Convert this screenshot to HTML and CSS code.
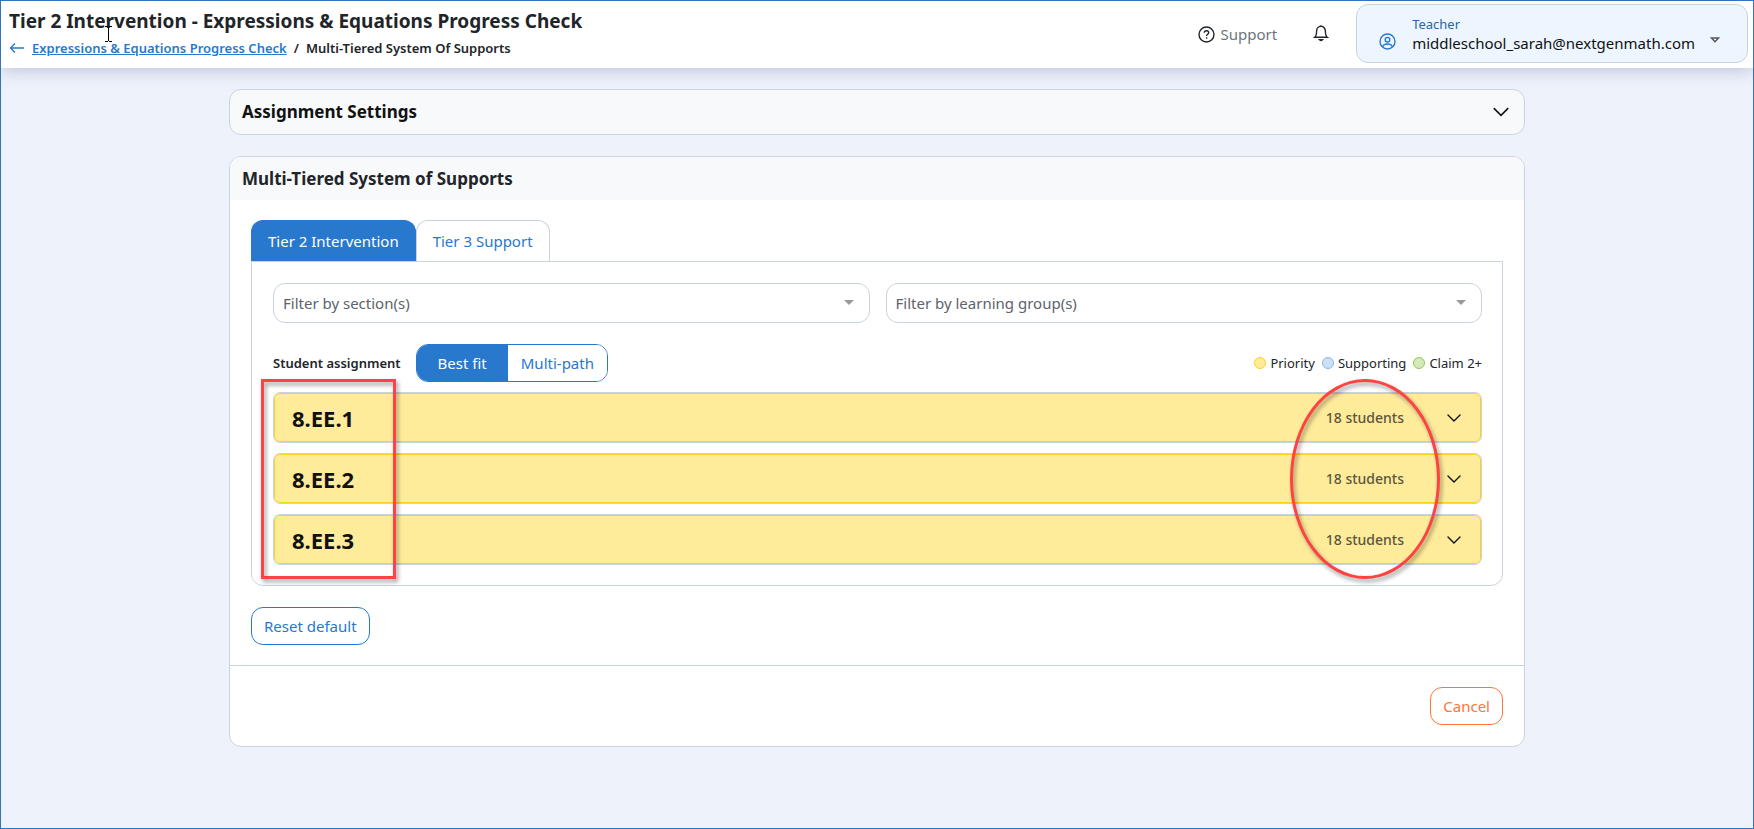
FILE: index.html
```
<!DOCTYPE html>
<html lang="en">
<head>
    <meta charset="UTF-8">
    <meta name="viewport" content="width=device-width, initial-scale=1.0">
    <title>Tier 2 Intervention - Expressions &amp; Equations Progress Check</title>
    <link rel="stylesheet" href="styles.css">
</head>
<body>
    <header class="topbar">
        <div class="titles">
            <h1>Tier 2 Intervention - Expressions &amp; Equations Progress Check</h1>
            <nav class="breadcrumb">
                <svg class="back-arrow" width="16" height="16" viewBox="0 0 16 16"><path d="M15 8H1.500M6 3.500L1.500 8 6 12.500"/></svg>
                <a href="#">Expressions &amp; Equations Progress Check</a>
                <span>/</span>
                <span>Multi-Tiered System Of Supports</span>
            </nav>
            <svg class="text-cursor" width="7" height="16" viewBox="0 0 7 16"><path d="M0 .5h3M4 .5h3M3.500 1v14M0 15.500h3M4 15.500h3"/></svg>
        </div>
        <div class="top-actions">
            <a class="support" href="#">
                <svg width="17" height="17" viewBox="0 0 17 17"><circle cx="8.500" cy="8.500" r="7.500"/><path d="M6.300 6.800c0-1.300 1-2.100 2.200-2.100s2.200.8 2.200 2c0 1.600-2.100 1.600-2.100 3.200"/><path d="M8.600 11.300v1.400"/></svg>
                Support
            </a>
            <button type="button" class="bell" aria-label="Notifications">
                <svg width="16" height="18" viewBox="0 0 16 18"><path d="M8 1.200v1.300M1.700 13.300h12.600c-1.300-1-1.900-3-1.900-6C12.400 4.500 10.500 2.300 8 2.300S3.600 4.500 3.600 7.300c0 3-.6 5-1.900 6z"/><path d="M6.600 15.800c.7.700 2.100.7 2.800 0z"/></svg>
            </button>
            <button type="button" class="account">
                <svg class="avatar" width="17" height="17" viewBox="0 0 17 17"><circle cx="8.500" cy="8.500" r="7.500"/><circle cx="8.500" cy="6.700" r="2.300"/><path d="M3.800 14c.2-2.200 1.700-3 4.700-3s4.500.8 4.700 3"/></svg>
                <span class="account-text">
                    <span class="role">Teacher</span>
                    <span class="email">middleschool_sarah@nextgenmath.com</span>
                </span>
                <svg class="caret" width="10" height="6" viewBox="0 0 10 6"><path d="M1.500 1h7L5 4.700z"/></svg>
            </button>
        </div>
    </header>

    <main class="container">
        <button type="button" class="settings">
            <span>Assignment Settings</span>
            <svg class="chevron" width="18" height="18" viewBox="0 0 16 16"><path d="M2 5l6 6 6-6"/></svg>
        </button>

        <section class="card">
            <h2>Multi-Tiered System of Supports</h2>
            <div class="card-body">
                <div class="tabs">
                    <button type="button" class="tab active">Tier 2 Intervention</button>
                    <button type="button" class="tab">Tier 3 Support</button>
                </div>
                <div class="panel">
                    <div class="filters">
                        <select aria-label="Filter by section(s)">
                            <option>Filter by section(s)</option>
                        </select>
                        <select aria-label="Filter by learning group(s)">
                            <option>Filter by learning group(s)</option>
                        </select>
                    </div>
                    <div class="options">
                        <span class="options-label">Student assignment</span>
                        <div class="toggle">
                            <button type="button" class="active">Best fit</button>
                            <button type="button">Multi-path</button>
                        </div>
                        <div class="legend">
                            <span class="key priority">Priority</span>
                            <span class="key supporting">Supporting</span>
                            <span class="key claim">Claim 2+</span>
                        </div>
                    </div>
                    <div class="standards">
                        <button type="button" class="standard">
                            <span class="code">8.EE.1</span>
                            <span class="count">18 students</span>
                            <svg class="chevron" width="16" height="16" viewBox="0 0 16 16"><path d="M2 5l6 6 6-6"/></svg>
                        </button>
                        <button type="button" class="standard">
                            <span class="code">8.EE.2</span>
                            <span class="count">18 students</span>
                            <svg class="chevron" width="16" height="16" viewBox="0 0 16 16"><path d="M2 5l6 6 6-6"/></svg>
                        </button>
                        <button type="button" class="standard">
                            <span class="code">8.EE.3</span>
                            <span class="count">18 students</span>
                            <svg class="chevron" width="16" height="16" viewBox="0 0 16 16"><path d="M2 5l6 6 6-6"/></svg>
                        </button>
                        <div class="mark mark-codes"></div>
                        <div class="mark mark-counts"></div>
                    </div>
                </div>
                <button type="button" class="btn">Reset default</button>
            </div>
            <div class="card-footer">
                <button type="button" class="btn btn-cancel">Cancel</button>
            </div>
        </section>
    </main>
</body>
</html>
```
FILE: styles.css
```
* {
    box-sizing: border-box;
}
body {
    margin: 0;
    min-height: 100vh;
    border: 1px solid #2f74bd;
    background: #eef3fb;
    color: #212529;
    font-family: "Segoe UI", "Noto Sans", sans-serif;
    font-size: 15px;
    line-height: 24px;
}
button, select {
    font: inherit;
    color: inherit;
    cursor: pointer;
}
svg {
    fill: none;
    stroke: currentColor;
    flex: none;
}

/* Top bar */
.topbar {
    display: flex;
    justify-content: space-between;
    height: 67px;
    padding: 3px 5px 0 8px;
    background: #fff;
    box-shadow: 0 1px 18px rgba(90, 100, 150, 0.4);
}
.titles {
    position: relative;
    padding-top: 5px;
}
h1 {
    margin: 0;
    font-size: 19px;
    font-weight: 700;
}
.breadcrumb {
    display: flex;
    align-items: center;
    gap: 7px;
    margin-top: 3px;
    font-size: 13px;
    font-weight: 600;
}
.breadcrumb a {
    color: #2878cd;
}
.back-arrow {
    color: #2878cd;
    stroke-width: 1.4;
}
.text-cursor {
    position: absolute;
    left: 96px;
    top: 22px;
    color: #000;
}
.top-actions {
    display: flex;
    align-items: flex-start;
}
.support {
    display: flex;
    align-items: center;
    gap: 6px;
    margin-top: 18px;
    color: #6c757d;
    text-decoration: none;
}
.support svg {
    color: #212529;
    stroke-width: 1.4;
}
.bell {
    display: flex;
    margin: 20px 27px 0 36px;
    padding: 0;
    border: 0;
    background: none;
    stroke-width: 1.4;
}
.account {
    display: flex;
    align-items: center;
    height: 59px;
    padding: 0 27px 0 22px;
    border: 1px solid #c9d3df;
    border-radius: 12px;
    background: #edf6ff;
    text-align: left;
}
.avatar {
    margin: 16px 16px 0 0;
    color: #2878cd;
    stroke-width: 1.4;
}
.account-text {
    display: flex;
    flex-direction: column;
    line-height: 19px;
}
.role {
    color: #2467b0;
    font-size: 13px;
}
.email {
    color: #111;
}
.caret {
    margin: 12px 0 0 15px;
    color: #555;
    stroke-width: 1.4;
}

/* Content */
.container {
    width: 74%;
    max-width: 1296px;
    margin: 21px auto 0;
}
.settings {
    display: flex;
    align-items: center;
    justify-content: space-between;
    width: 100%;
    height: 46px;
    padding: 0 14px 0 12px;
    border: 1px solid #c9d3df;
    border-radius: 12px;
    background: #f8f9fb;
    color: #111;
    font-size: 17px;
    font-weight: 700;
}
.chevron {
    color: #111;
    stroke-width: 1.4;
    stroke-linecap: round;
}
.card {
    margin-top: 21px;
    border: 1px solid #c9d3df;
    border-radius: 12px;
    background: #fff;
    overflow: hidden;
}
h2 {
    margin: 0;
    padding: 10px 12px 9px;
    background: #f8f9fb;
    font-size: 17px;
    font-weight: 700;
}
.card-body {
    padding: 20px 21px;
}
.tabs {
    display: flex;
}
.tab {
    height: 41px;
    padding: 0 16px;
    border: 1px solid #c9d3df;
    border-bottom: 0;
    border-radius: 12px 12px 0 0;
    background: #fff;
    color: #2878cd;
}
.tab.active {
    border-color: #2878cd;
    background: #2878cd;
    color: #fff;
}
.panel {
    margin-bottom: 21px;
    padding: 21px 20px 20px 21px;
    border: 1px solid #c9d3df;
    border-radius: 0 0 12px 12px;
}
.filters {
    display: grid;
    grid-template-columns: 1fr 1fr;
    gap: 16px;
}
select {
    appearance: none;
    height: 40px;
    padding: 0 9px;
    border: 1px solid #c9d3df;
    border-radius: 12px;
    background: #fff url("data:image/svg+xml,%3Csvg xmlns='http://www.w3.org/2000/svg' width='10' height='5'%3E%3Cpath d='M0 0h10L5 5z' fill='%23999'/%3E%3C/svg%3E") no-repeat right 15px top 16px;
    color: #5c636a;
}
.options {
    display: flex;
    align-items: center;
    margin: 21px 0 10px;
}
.options-label {
    font-size: 13px;
    font-weight: 600;
}
.toggle {
    display: flex;
    margin-left: 15px;
    border: 1px solid #2878cd;
    border-radius: 12px;
    overflow: hidden;
}
.toggle button {
    height: 36px;
    padding: 0 13px;
    border: 0;
    background: #fff;
    color: #2878cd;
}
.toggle .active {
    padding: 0 21px;
    background: #2878cd;
    color: #fff;
}
.legend {
    display: flex;
    gap: 7px;
    margin-left: auto;
    font-size: 13px;
}
.key {
    display: flex;
    align-items: center;
    gap: 4px;
}
.key::before {
    content: "";
    width: 10px;
    height: 10px;
    border: 1px solid #ffd21f;
    border-radius: 50%;
    background: #ffec9b;
}
.supporting::before {
    border-color: #8ab6ea;
    background: #cbdff6;
}
.claim::before {
    border-color: #95c753;
    background: #d4e9b8;
}
.standards {
    position: relative;
    display: flex;
    flex-direction: column;
    gap: 10px;
}
.standard {
    display: flex;
    align-items: center;
    height: 49px;
    margin: 1px;
    padding: 0 18px 0 17px;
    border: 1px solid #ffd21f;
    border-radius: 6px;
    outline: 1px solid #c9d3df;
    background: #ffec9b;
}
.code {
    color: #111;
    font-size: 22px;
    font-weight: 700;
}
.count {
    margin: 0 42px 0 auto;
    color: #5c563f;
    font-size: 14px;
    font-weight: 500;
}

/* Red highlights over the list */
.mark {
    position: absolute;
    top: -13px;
    bottom: -14px;
    border: 3px solid #ff4343;
    filter: drop-shadow(2px 3px 2px rgba(0, 0, 0, 0.4));
    pointer-events: none;
}
.mark-codes {
    left: -12px;
    width: 135px;
}
.mark-counts {
    right: 42px;
    width: 150px;
    border-radius: 50%;
}
.btn {
    display: block;
    height: 38px;
    padding: 0 12px;
    border: 1px solid #2878cd;
    border-radius: 12px;
    background: #fff;
    color: #2878cd;
}
.btn-cancel {
    margin-left: auto;
    border-color: #ff7535;
    color: #ff7535;
}
.card-footer {
    padding: 21px;
    border-top: 1px solid #c9d3df;
}
```
